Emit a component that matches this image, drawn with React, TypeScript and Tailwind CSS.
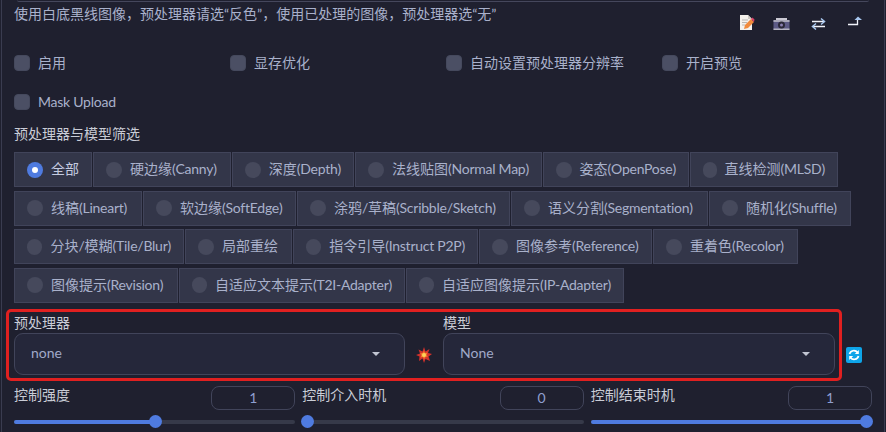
const radioRows = [
  [
    { label: "全部", w: "w-[78px]" },
    { label: "硬边缘(Canny)", w: "w-[138px]" },
    { label: "深度(Depth)", w: "w-[122px]" },
    { label: "法线贴图(Normal Map)", w: "w-[187px]" },
    { label: "姿态(OpenPose)", w: "w-[146px]" },
    { label: "直线检测(MLSD)", w: "w-[148px]" },
  ],
  [
    { label: "线稿(Lineart)", w: "w-[128px]" },
    { label: "软边缘(SoftEdge)", w: "w-[153px]" },
    { label: "涂鸦/草稿(Scribble/Sketch)", w: "w-[213px]" },
    { label: "语义分割(Segmentation)", w: "w-[197px]" },
    { label: "随机化(Shuffle)", w: "w-[142px]" },
  ],
  [
    { label: "分块/模糊(Tile/Blur)", w: "w-[170px]" },
    { label: "局部重绘", w: "w-[107px]" },
    { label: "指令引导(Instruct P2P)", w: "w-[185px]" },
    { label: "图像参考(Reference)", w: "w-[173px]" },
    { label: "重着色(Recolor)", w: "w-[145px]" },
  ],
  [
    { label: "图像提示(Revision)", w: "w-[164px]" },
    { label: "自适应文本提示(T2I-Adapter)", w: "w-[226px]" },
    { label: "自适应图像提示(IP-Adapter)", w: "w-[218px]" },
  ],
];

// Latin runs sit a touch tighter than Lato's default, CJK stays on the 14px grid
function Mixed({ text }: { text: string }) {
  return (
    <>
      {text.split(/([\x00-\x7f]+)/).map((part, i) =>
        i % 2 === 1 ? (
          <span key={i} className="tracking-[-0.25px]">{part}</span>
        ) : (
          part
        )
      )}
    </>
  );
}

function NoteIcon() {
  return (
    <svg width="16" height="17" viewBox="0 0 16 17">
      <path d="M1 1h8l4 4v11H1z" fill="#f4f1ec" />
      <path d="M9 1v4h4z" fill="#cfcac4" />
      <path d="M3 6h6M3 8.500h5M3 11h3" stroke="#b9b5b2" strokeWidth="1" />
      <path d="M5 15l1-4 6-6 3 3-6 6z" fill="#f08a3c" />
      <path d="M12 5l1.500-1.500 2 2L15 8z" fill="#d8436a" />
    </svg>
  );
}

function CameraIcon() {
  return (
    <svg width="17" height="14" viewBox="0 0 17 14">
      <path d="M3 1h11v2H3z" fill="#c9c8d2" />
      <rect x="0.500" y="3" width="16" height="10" rx="1" fill="#5c5a85" />
      <rect x="0.500" y="3" width="16" height="2" fill="#a9a8b8" />
      <rect x="0.500" y="11.500" width="16" height="1.500" fill="#b5b4c2" />
      <circle cx="8.500" cy="8" r="3.500" fill="#2a2838" />
      <circle cx="8.500" cy="8" r="1.500" fill="#8a7fb0" />
    </svg>
  );
}

function SwapIcon() {
  return (
    <svg width="15" height="14" viewBox="0 0 15 14" fill="none" strokeWidth="1.500">
      <path d="M1 4.500h12" stroke="#f1f3fa" />
      <path d="M10 1.500l3.500 3-3.500 3" stroke="#a9c8f0" />
      <path d="M14 9.500H2" stroke="#f1f3fa" />
      <path d="M5 6.500l-3.500 3 3.500 3" stroke="#a9c8f0" />
    </svg>
  );
}

function ReturnIcon() {
  return (
    <svg width="15" height="10" viewBox="0 0 15 10" fill="none">
      <path d="M0 8.500h9.500V3" stroke="#f1f3fa" strokeWidth="1.300" />
      <path d="M6.500 4L10 0.500 14 4z" fill="#a9c8f0" />
    </svg>
  );
}

function BoomIcon() {
  return (
    <svg width="16" height="16" viewBox="0 0 16 16">
      <path d="M8 0l1.500 4.500L13.500 2 12 6l4 1-3.500 2.500L14 14l-4.500-2L8 16l-1.500-4.500L3 14l.5-4.500L0 8l4-1.500L2.500 2.500l4 2z" fill="#d3312c" />
      <path d="M8 3.500l1 2.500 2.500-.5-1 2.500 1.500 1.500-2.500.5L8 12.500 7 10l-2.500.5L5.500 8 4 6.500 6.500 6z" fill="#f2792b" />
      <circle cx="8" cy="8" r="2" fill="#fbd25a" />
    </svg>
  );
}

function RefreshIcon() {
  return (
    <svg width="16" height="16" viewBox="0 0 16 16" fill="none">
      <rect width="16" height="16" rx="2" fill="#0ea5e9" />
      <path d="M3.500 7a4.500 4.500 0 0 1 8-1.500" stroke="#fff" strokeWidth="1.700" />
      <path d="M12.500 9a4.500 4.500 0 0 1-8 1.500" stroke="#fff" strokeWidth="1.700" />
      <path d="M12.800 3v4h-4z" fill="#fff" />
      <path d="M3.200 13V9h4z" fill="#fff" />
    </svg>
  );
}

function CheckItem({ label }: { label: string }) {
  return (
    <label className="flex items-center gap-2 h-4 text-sm text-[#a9b1cb]">
      <span className="w-4 h-4 rounded-[4px] bg-[#4b4f64] border border-[#45495d]" />
      <span className="-mt-px"><Mixed text={label} /></span>
    </label>
  );
}

function RadioItem({ label, w, checked }: { label: string; w: string; checked: boolean }) {
  return (
    <label className={`flex items-center gap-2 h-[35px] px-[12px] bg-[#333649] border border-[#41445a] text-sm text-[#a9b1cb] whitespace-nowrap ${w}`}>
      {checked ? (
        <span className="w-4 h-4 rounded-full bg-[#4f7be0] flex items-center justify-center">
          <span className="w-[6px] h-[6px] rounded-full bg-white" />
        </span>
      ) : (
        <span className="w-4 h-4 rounded-full bg-[#46495c]" />
      )}
      <span className={checked ? "-mt-px text-[#c5cbe0]" : "-mt-px"}><Mixed text={label} /></span>
    </label>
  );
}

function SelectBox({ label, value, width }: { label: string; value: string; width: string }) {
  return (
    <div className={`flex flex-col ${width}`}>
      <span className="h-[19px] leading-[18px] text-sm text-[#c9ccd6]">{label}</span>
      <div className="h-[42px] rounded-[9px] border border-[#41445a] bg-[#25273a] flex items-center justify-between pl-4 pr-[24px]">
        <span className="text-sm -mt-[2px] text-[#a0a9c8]">{value}</span>
        <span className="w-0 h-0 border-x-[4px] border-x-transparent border-t-[4px] border-t-[#c2c5d2]" />
      </div>
    </div>
  );
}

function SliderBox({ label, value, percent }: { label: string; value: string; percent: number }) {
  return (
    <div className="flex flex-col">
      <div className="flex justify-between h-6">
        <span className="text-sm leading-[18px] text-[#c9ccd6]">{label}</span>
        <span className="w-[84px] h-6 rounded-[8px] border border-[#41445a] flex items-center justify-center text-sm text-[#8f9fd0]">
          {value}
        </span>
      </div>
      <div className="relative h-1 mt-[10px] bg-[#363949] rounded-full">
        <div className="h-1 bg-[#4f7be0] rounded-full" style={{ width: `${percent}%` }} />
        <div
          className="absolute top-[-4.500px] w-[13px] h-[13px] -ml-[6.500px] rounded-full bg-[#4f7be0]"
          style={{ left: `${percent}%` }}
        />
      </div>
    </div>
  );
}

export default function App() {
  return (
    <div
      className="w-[886px] h-[432px] overflow-hidden bg-[#1f202f]"
      style={{ fontFamily: 'Lato, "Noto Sans CJK SC", sans-serif' }}
    >
      <div className="h-full ml-px mr-px border-x border-[#3a3c50] pl-3 pr-3 flex flex-col">
        {/* Textarea edge from the panel above */}
        <div className="h-[2px] mx-[3px] border-b border-[#45475c] rounded-b" />

        {/* Hint + tool icons */}
        <div className="flex justify-between h-[53px]">
          <p className="text-sm leading-[20px] mt-[2px] text-[#a9b1cb]">
            使用白底黑线图像，预处理器请选“反色”，使用已处理的图像，预处理器选“无”
          </p>
          <div className="flex items-start pt-[12px] pr-[9px]">
            <NoteIcon />
            <div className="ml-[18px] mt-[3px]"><CameraIcon /></div>
            <div className="ml-[21px] mt-[3px]"><SwapIcon /></div>
            <div className="ml-[22px] mt-[2px]"><ReturnIcon /></div>
          </div>
        </div>

        {/* Checkboxes */}
        <div className="grid grid-cols-4 w-[864px] h-4">
          <CheckItem label="启用" />
          <CheckItem label="显存优化" />
          <CheckItem label="自动设置预处理器分辨率" />
          <CheckItem label="开启预览" />
        </div>
        <div className="mt-[23px]">
          <CheckItem label="Mask Upload" />
        </div>

        <div className="mt-[14px] h-5 leading-5 text-sm text-[#c9ccd6]">预处理器与模型筛选</div>

        {/* Filter radios */}
        <div className="mt-[8px] flex flex-col gap-y-[3.670px]">
          {radioRows.map((row) => (
            <div key={row[0].label} className="flex gap-px">
              {row.map((item) => (
                <RadioItem key={item.label} label={item.label} w={item.w} checked={item.label === "全部"} />
              ))}
            </div>
          ))}
        </div>

        {/* Preprocessor / model */}
        <div className="relative mt-[11px] flex items-end">
          <SelectBox label="预处理器" value="none" width="w-[391px]" />
          <div className="w-[38px] h-[42px] pt-[3px] flex items-center justify-center"><BoomIcon /></div>
          <SelectBox label="模型" value="None" width="w-[392px]" />
          <div className="ml-[11px] h-[42px] pt-[3px] flex items-center"><RefreshIcon /></div>
          <div className="absolute left-[-8px] top-[-5px] w-[836px] h-[72px] border-[3px] border-[#e02020] rounded-[5px]" />
        </div>

        {/* Sliders */}
        <div className="mt-[11px] grid grid-cols-3 gap-x-[7px] w-[858px]">
          <SliderBox label="控制强度" value="1" percent={50.2} />
          <SliderBox label="控制介入时机" value="0" percent={2} />
          <SliderBox label="控制结束时机" value="1" percent={98} />
        </div>
      </div>
    </div>
  );
}
